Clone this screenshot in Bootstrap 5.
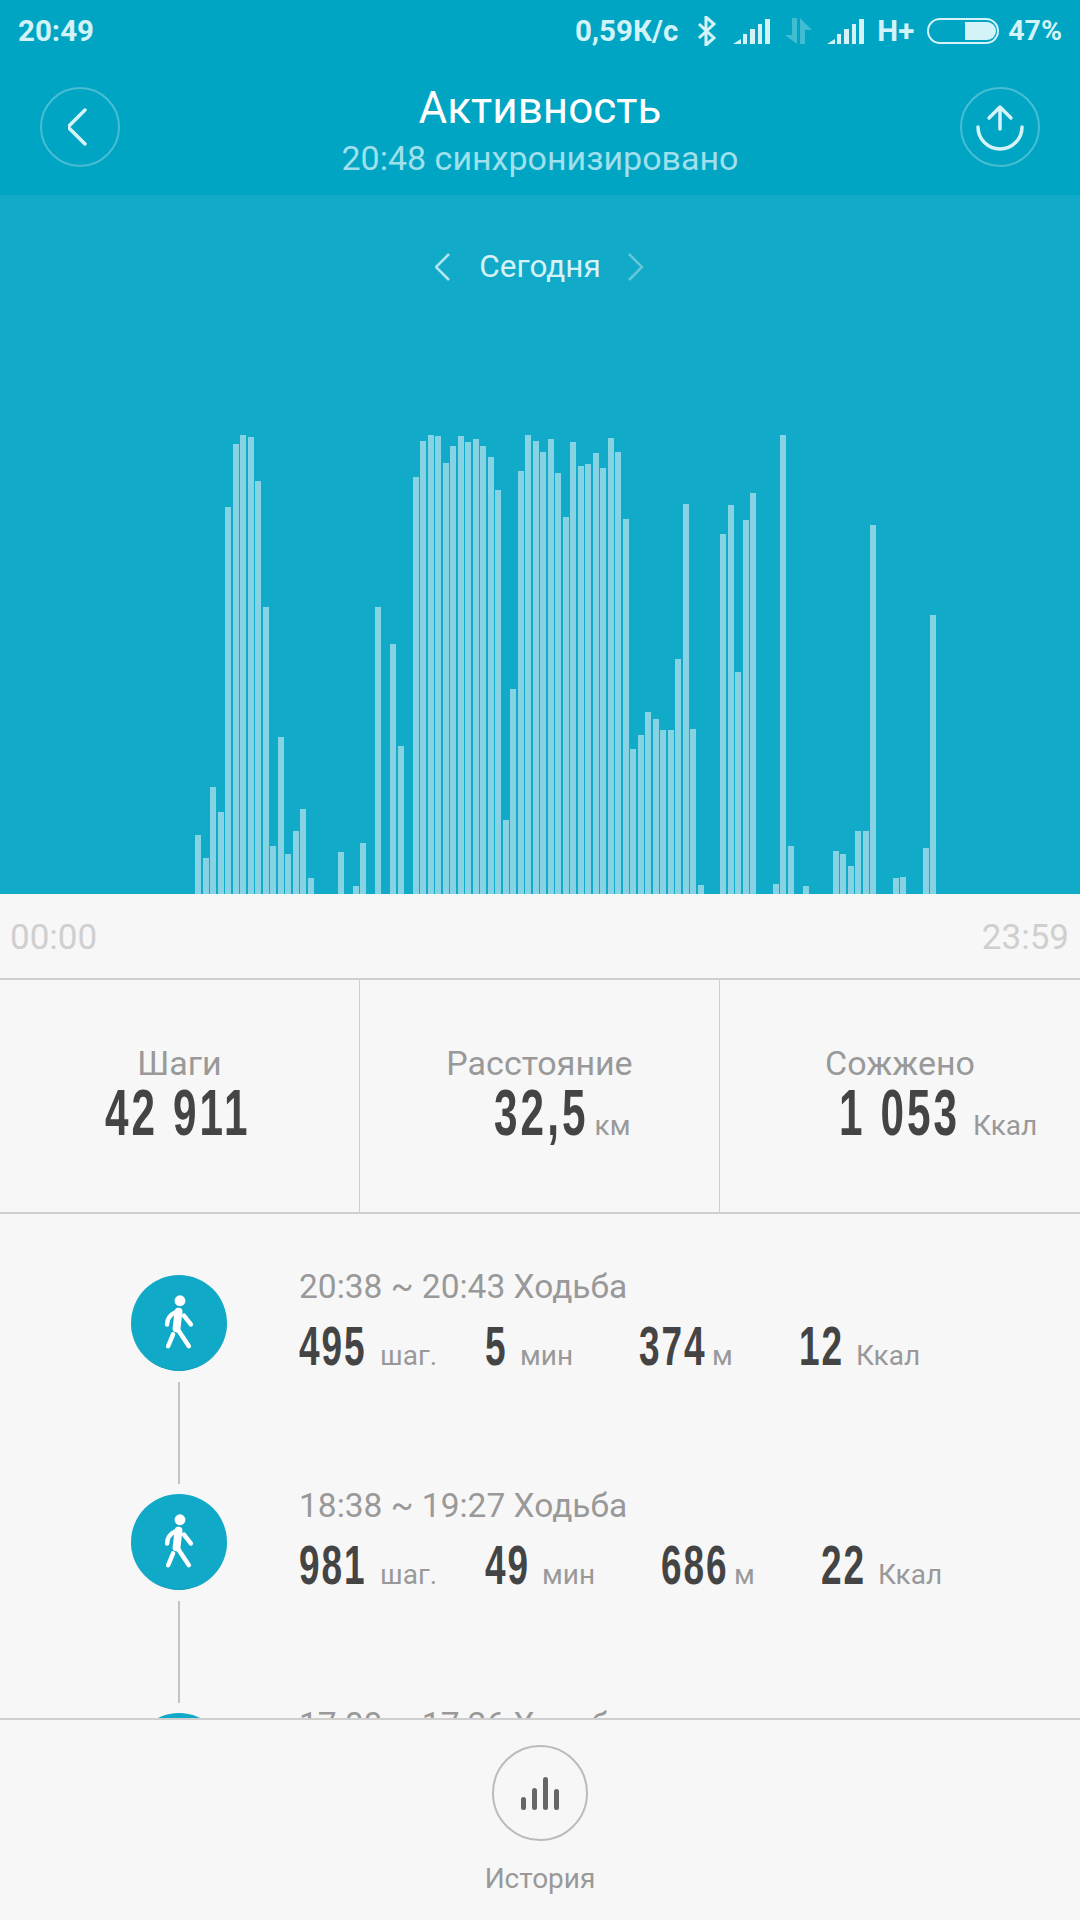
<!DOCTYPE html>
<html lang="ru">
<head>
    <meta charset="UTF-8">
    <meta name="viewport" content="width=device-width, initial-scale=1.0">
    <title>Активность</title>
    <link href="https://cdn.jsdelivr.net/npm/bootstrap@5.3.0/dist/css/bootstrap.min.css" rel="stylesheet">
    <style>
        body {
            background-color: #f7f7f7;
            font-family: Roboto, "Liberation Sans", sans-serif;
            width: 1080px;
            height: 1920px;
            overflow: hidden;
        }
        .top-head { background-color: #00a5c3; height: 195px; }
        .status-bar { height: 62px; padding: 0 18px 0 18px; color: #d3f3f8; font-size: 29.5px; font-weight: 700; line-height: 62px; }
        .sp-19 { margin-left: 19px; }
        .sp-16 { margin-left: 16px; }
        .sp-15 { margin-left: 15px; }
        .sp-13 { margin-left: 13px; }
        .sp-9 { margin-left: 9px; }
        .pct-text { font-size: 28.5px; }
        .tool-row { padding: 25px 40px 0 40px; }
        .round-btn { width: 80px; height: 80px; border: 2px solid rgba(255,255,255,.28); border-radius: 50%; flex: none; }
        .head-title { color: #fff; font-size: 44px; line-height: 50px; margin-top: -4px; }
        .head-sub { color: #9fe0ec; font-size: 34px; line-height: 38px; margin-top: 6px; }

        .chart-wrap { background-color: #11aac8; height: 699px; }
        .date-row { margin-top: 54px; height: 36px; color: #d5f2f7; font-size: 31.5px; line-height: 36px; gap: 26px; }
        .bars-box { padding-left: 195px; gap: 1.5px; height: 470px; }
        .bar-item { width: 6px; flex: none; background-color: #87d3e3; }

        .time-row { height: 84px; padding: 0 11px 0 10px; color: #cfcfcf; font-size: 35px; line-height: 88px; }
        .stat-row { height: 236px; border-top: 2px solid #cfcfcf; border-bottom: 2px solid #cfcfcf; }
        .stat-cell { width: 360px; height: 100%; border-right: 1px solid #cfcfcf; padding-top: 64px; text-align: center; }
        .stat-cell:last-child { border-right: 0; }
        .stat-label { color: #999; font-size: 34px; line-height: 38px; }
        .stat-value { display: grid; grid-template-columns: 1fr auto 1fr; align-items: baseline; line-height: 62px; }

        /* no condensed face installed, so squeeze the digits */
        .fig { display: inline-block; color: #444; font-family: "Liberation Sans", sans-serif; font-weight: 700; white-space: nowrap; transform: scaleX(.66); transform-origin: 0 50%; text-align: left; }
        .fig-big { font-size: 64px; letter-spacing: 4.7px; }
        .steps-fig { width: 150px; }
        .dist-fig { width: 92px; }
        .burn-fig { width: 122px; }
        .fig-small { font-size: 56px; line-height: 54px; letter-spacing: 3px; }
        .w1 { width: 20px; }
        .w2 { width: 42px; }
        .w3 { width: 66px; }
        .unit-text { color: #999; font-size: 28px; text-align: left; }
        .stat-value .unit-text { padding-left: 9px; }
        .stat-value .unit-wide { padding-left: 12px; }

        .list-wrap { height: 504px; overflow: hidden; padding: 61px 0 0 131px; }
        .walk-row { height: 219px; }
        .walk-side { width: 96px; flex: none; }
        .walk-dot { width: 96px; height: 96px; border-radius: 50%; background-color: #10a9c8; border-bottom: 1px solid #0e9cb9; display: block; }
        .walk-line { width: 2px; height: 102px; background-color: #c4c4c4; margin: 11px auto 0; }
        .walk-body { margin-left: 72px; }
        .walk-time { color: #999; font-size: 33.5px; line-height: 40px; margin-top: -8px; }
        .walk-stats { margin-top: 12px; line-height: 54px; }
        .metric { margin-right: 66px; }
        .metric:first-child { margin-right: 48px; }
        .metric .unit-text { margin-left: 15px; }
        .metric .unit-near { margin-left: 7px; }

        .bottom-tab { height: 200px; border-top: 2px solid #cfcfcf; background-color: #f7f7f7; }
        .tab-btn { width: 96px; height: 96px; margin-top: 25px; border: 2px solid #bbb; border-radius: 50%; }
        .tab-label { color: #999; font-size: 28px; line-height: 34px; margin-top: 21px; }
    </style>
</head>
<body>
    <!-- Header -->
    <div class="top-head">
        <div class="status-bar d-flex justify-content-between">
            <span>20:49</span>
            <div class="d-flex align-items-center">
                <span>0,59К/с</span>
                <svg class="sp-19" width="20" height="30" viewBox="0 0 20 30" fill="none" stroke="#d3f3f8" stroke-width="3"><path d="M2 8l15 14-8 7V1l8 7L2 22"/></svg>
                <svg class="sp-16" width="37" height="25" viewBox="0 0 37 25" fill="#d3f3f8"><path d="M0 25l8-5v5z"/><rect x="10" y="15" width="4" height="10"/><rect x="17" y="10" width="5" height="15"/><rect x="25" y="5" width="4" height="20"/><rect x="32" y="0" width="5" height="25"/></svg>
                <svg class="sp-15" width="27" height="26" viewBox="0 0 27 26" fill="#d3f3f8" opacity=".3"><path d="M7 0h5v26L0 17h7z"/><path d="M15 0l12 12h-7v14h-5z"/></svg>
                <svg class="sp-15" width="37" height="25" viewBox="0 0 37 25" fill="#d3f3f8"><path d="M0 25l8-5v5z"/><rect x="10" y="15" width="4" height="10"/><rect x="17" y="10" width="5" height="15"/><rect x="25" y="5" width="4" height="20"/><rect x="32" y="0" width="5" height="25"/></svg>
                <span class="sp-13">H+</span>
                <svg class="sp-13" width="72" height="26" viewBox="0 0 72 26"><rect x="1" y="1" width="70" height="24" rx="12" fill="none" stroke="#d3f3f8" stroke-width="2"/><path d="M38 4h22a9 9 0 0 1 0 18H38z" fill="#d3f3f8"/></svg>
                <span class="sp-9 pct-text">47%</span>
            </div>
        </div>
        <div class="tool-row d-flex">
            <div class="round-btn d-flex align-items-center justify-content-center">
                <svg width="24" height="40" viewBox="4 0 24 40" fill="none" stroke="#d5f3f8" stroke-width="3.5" stroke-linecap="round" stroke-linejoin="round"><path d="M21 3L4 20l17 17"/></svg>
            </div>
            <div class="flex-fill text-center">
                <div class="head-title">Активность</div>
                <div class="head-sub">20:48 синхронизировано</div>
            </div>
            <div class="round-btn d-flex align-items-center justify-content-center">
                <svg width="48" height="48" viewBox="0 0 48 48" fill="none" stroke="#d5f3f8" stroke-width="3.5" stroke-linecap="round" stroke-linejoin="round"><path d="M2 24a22 22 0 0 0 44 0"/><path d="M24 26V4M13 15L24 4l11 11"/></svg>
            </div>
        </div>
    </div>

    <!-- Chart -->
    <div class="chart-wrap d-flex flex-column justify-content-between">
        <div class="date-row d-flex justify-content-center align-items-center">
            <svg width="18" height="30" viewBox="2 0 18 30" fill="none" stroke="#b4e6f0" stroke-width="2.5"><path d="M16 2L3 15l13 13"/></svg>
            <span>Сегодня</span>
            <svg width="18" height="30" viewBox="0 0 18 30" fill="none" stroke="#66c6da" stroke-width="2.5"><path d="M2 2l13 13L2 28"/></svg>
        </div>
        <div id="bars" class="bars-box d-flex align-items-end"></div>
    </div>

    <div class="time-row d-flex justify-content-between">
        <span>00:00</span>
        <span>23:59</span>
    </div>

    <!-- Totals -->
    <div class="stat-row d-flex">
        <div class="stat-cell">
            <div class="stat-label">Шаги</div>
            <div class="stat-value"><span></span><span class="fig fig-big steps-fig">42 911</span><span></span></div>
        </div>
        <div class="stat-cell">
            <div class="stat-label">Расстояние</div>
            <div class="stat-value"><span></span><span class="fig fig-big dist-fig">32,5</span><span class="unit-text">км</span></div>
        </div>
        <div class="stat-cell">
            <div class="stat-label">Сожжено</div>
            <div class="stat-value"><span></span><span class="fig fig-big burn-fig">1 053</span><span class="unit-text unit-wide">Ккал</span></div>
        </div>
    </div>

    <!-- Walks -->
    <div class="list-wrap">
        <div class="walk-row d-flex">
            <div class="walk-side">
                <svg class="walk-dot" viewBox="0 0 96 96"><use href="#walker"/></svg>
                <div class="walk-line"></div>
            </div>
            <div class="walk-body">
                <div class="walk-time">20:38 ~ 20:43 Ходьба</div>
                <div class="walk-stats d-flex align-items-baseline">
                    <div class="metric"><span class="fig fig-small w3">495</span><span class="unit-text">шаг.</span></div>
                    <div class="metric"><span class="fig fig-small w1">5</span><span class="unit-text">мин</span></div>
                    <div class="metric"><span class="fig fig-small w3">374</span><span class="unit-text unit-near">м</span></div>
                    <div class="metric"><span class="fig fig-small w2">12</span><span class="unit-text">Ккал</span></div>
                </div>
            </div>
        </div>
        <div class="walk-row d-flex">
            <div class="walk-side">
                <svg class="walk-dot" viewBox="0 0 96 96"><use href="#walker"/></svg>
                <div class="walk-line"></div>
            </div>
            <div class="walk-body">
                <div class="walk-time">18:38 ~ 19:27 Ходьба</div>
                <div class="walk-stats d-flex align-items-baseline">
                    <div class="metric"><span class="fig fig-small w3">981</span><span class="unit-text">шаг.</span></div>
                    <div class="metric"><span class="fig fig-small w2">49</span><span class="unit-text">мин</span></div>
                    <div class="metric"><span class="fig fig-small w3">686</span><span class="unit-text unit-near">м</span></div>
                    <div class="metric"><span class="fig fig-small w2">22</span><span class="unit-text">Ккал</span></div>
                </div>
            </div>
        </div>
        <div class="walk-row d-flex">
            <div class="walk-side">
                <svg class="walk-dot" viewBox="0 0 96 96"><use href="#walker"/></svg>
            </div>
            <div class="walk-body">
                <div class="walk-time">17:00 ~ 17:26 Ходьба</div>
            </div>
        </div>
    </div>

    <!-- Bottom tab -->
    <div class="bottom-tab d-flex flex-column align-items-center">
        <div class="tab-btn d-flex align-items-center justify-content-center">
            <svg width="38" height="33" viewBox="0 0 38 33" fill="#666"><rect x="0" y="20" width="5" height="13" rx="2.5"/><rect x="11" y="11" width="5" height="22" rx="2.5"/><rect x="22" y="0" width="5" height="33" rx="2.5"/><rect x="33" y="12" width="5" height="21" rx="2.5"/></svg>
        </div>
        <div class="tab-label">История</div>
    </div>

    <svg width="0" height="0" class="d-block">
        <defs>
            <g id="walker" fill="none" stroke="#fff" stroke-linecap="round" stroke-linejoin="round">
                <circle cx="49" cy="26" r="5.5" fill="#fff" stroke="none"/>
                <path d="M47.5 37L45.5 54" stroke-width="8"/>
                <path d="M44 38C38 41 36 45 36 50" stroke-width="4.5"/>
                <path d="M53 41L60 50" stroke-width="4.5"/>
                <path d="M45.5 53L58 72" stroke-width="4.5"/>
                <path d="M42 60L37 72" stroke-width="4.5"/>
            </g>
        </defs>
    </svg>

    <script src="https://cdn.jsdelivr.net/npm/bootstrap@5.3.0/dist/js/bootstrap.bundle.min.js"></script>
    <script>
        // bar heights in px, one per time slot, 0 = no activity
        const heights = [59,36,107,82,387,450,459,457,413,287,48,157,40,63,85,16,0,0,0,42,0,8,51,0,287,0,250,148,0,417,453,459,458,431,448,458,452,455,448,437,404,74,205,423,459,453,442,455,421,377,452,428,430,441,426,456,442,375,145,159,182,175,164,164,235,390,165,9,0,0,360,389,222,374,401,0,0,10,459,48,0,8,0,0,0,43,40,28,63,63,369,0,0,16,17,0,0,46,279];
        const box = document.getElementById('bars');
        heights.forEach(function(h) {
            const bar = document.createElement('div');
            bar.className = 'bar-item';
            bar.style.height = h + 'px';
            box.appendChild(bar);
        });
    </script>
</body>
</html>
